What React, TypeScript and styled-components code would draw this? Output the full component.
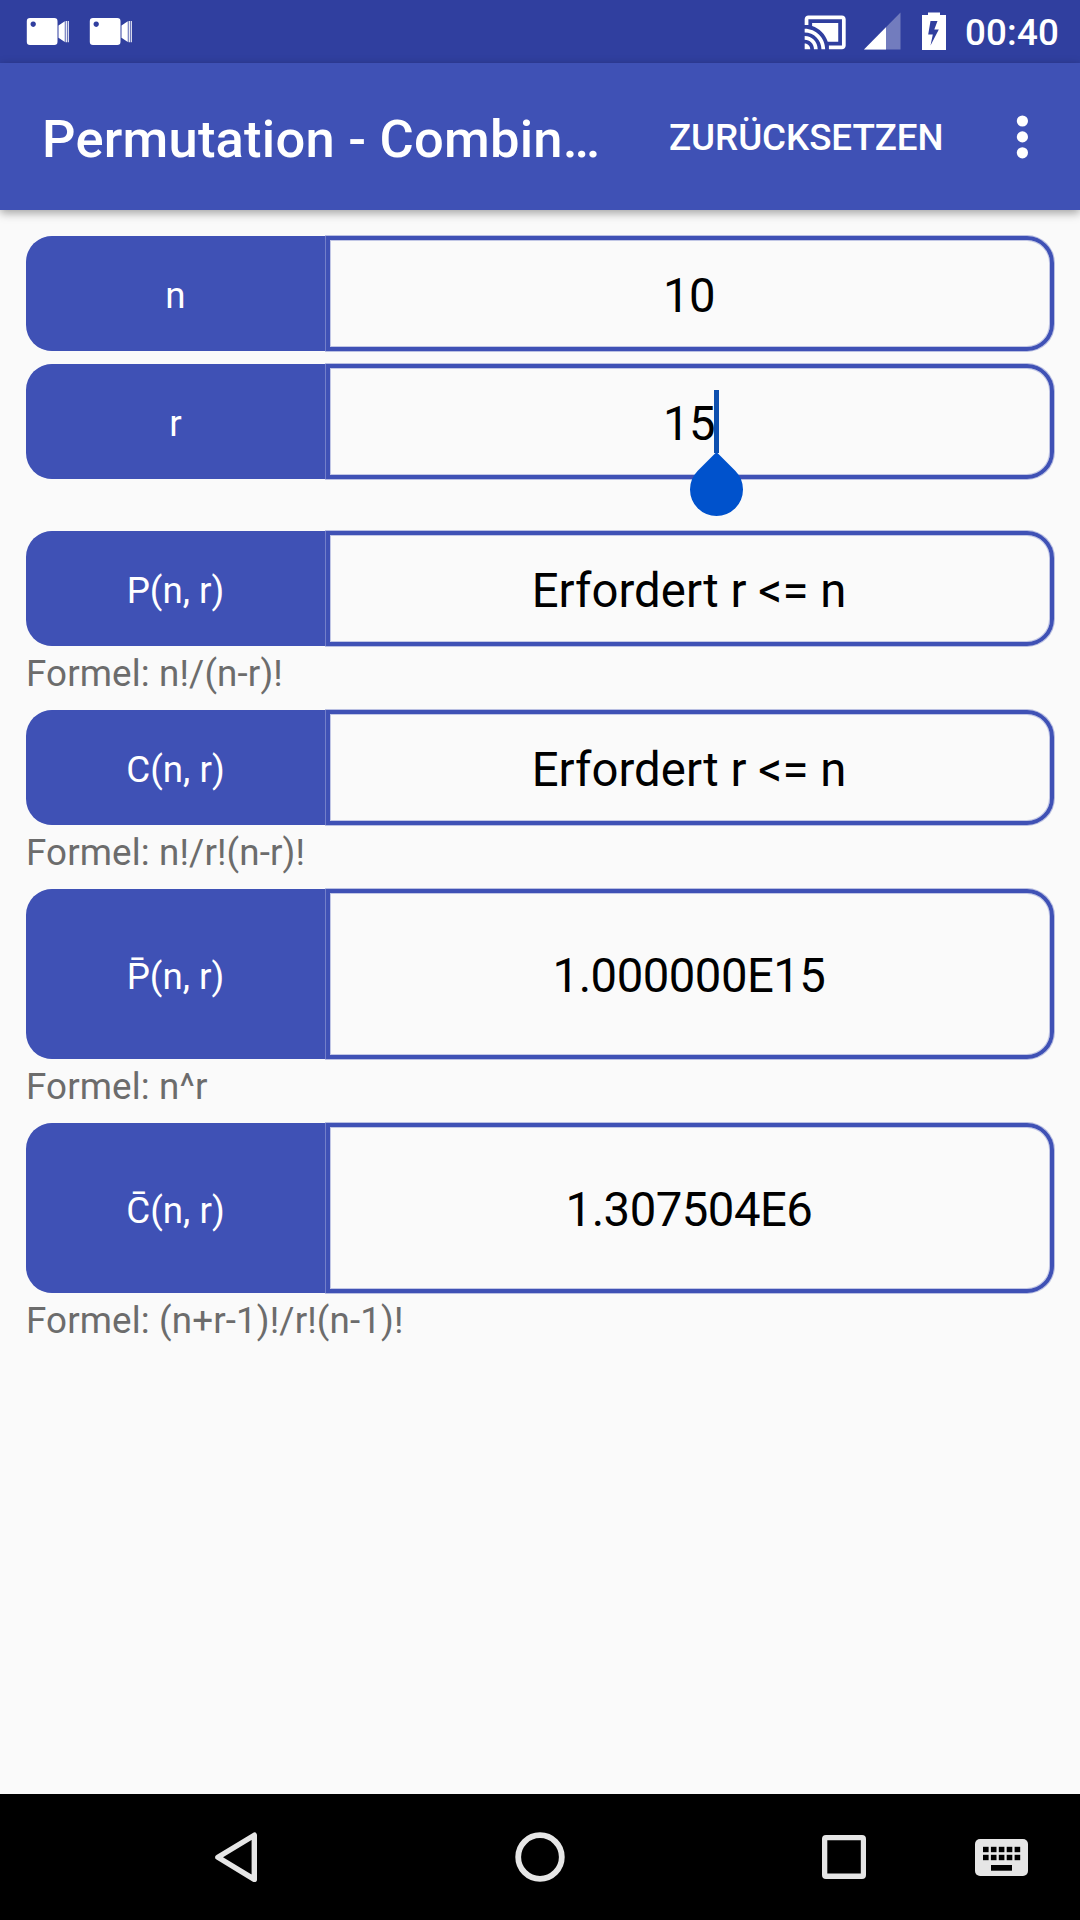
import React from "react";
import styled, { createGlobalStyle } from "styled-components";

const primary = "#3f51b5";

const GlobalStyle = createGlobalStyle`
  * { box-sizing: border-box; }
  body {
    margin: 0;
    background: #fafafa;
    font-family: Roboto, "Noto Sans", sans-serif;
  }
`;

const Screen = styled.div`
  display: flex;
  flex-direction: column;
  width: 1080px;
  height: 1920px;
  overflow: hidden;
  background: #fafafa;
`;

const StatusBar = styled.header`
  display: flex;
  justify-content: space-between;
  flex: none;
  height: 63px;
  padding: 0 21px 0 22px;
  background: #303f9f;
`;

const StatusGroup = styled.div`
  display: flex;
  align-items: center;
`;

const Clock = styled.span`
  padding: 3px 0 0 15px;
  color: #fff;
  font-size: 36.75px;
  font-weight: 500;
  letter-spacing: 0.15px;
  line-height: 44px;
`;

const Toolbar = styled.div`
  display: flex;
  align-items: center;
  flex: none;
  height: 147px;
  padding-left: 42px;
  background: ${primary};
  color: #fff;
  box-shadow: 0 3px 9px rgba(0, 0, 0, 0.36);
  z-index: 1;
`;

const Title = styled.h1`
  flex: none;
  width: 585px;
  margin: 0;
  padding-top: 4px;
  font-size: 52.5px;
  font-weight: 500;
  letter-spacing: 0.22px;
  line-height: 64px;
  white-space: nowrap;
`;

const Action = styled.button`
  flex: none;
  width: 378px;
  padding: 2px 0 0 42px;
  border: 0;
  background: none;
  color: inherit;
  font: 500 36.75px/44px Roboto, sans-serif;
  letter-spacing: -0.07px;
  text-align: left;
`;

const Content = styled.main`
  flex: 1;
  display: flex;
  flex-direction: column;
  padding: 26px 26px 0;
`;

const Row = styled.div<{ $tall?: boolean; $gap?: number }>`
  display: grid;
  grid-template-columns: 299px 728px;
  column-gap: 1px;
  height: ${(p) => (p.$tall ? 170 : 115)}px;
  margin-bottom: ${(p) => p.$gap ?? 0}px;
`;

const Label = styled.div`
  display: flex;
  align-items: center;
  justify-content: center;
  padding-top: 4px;
  border-radius: 26px 0 0 26px;
  background: ${primary};
  box-shadow: 1px 0 0 #8f99d4;
  color: #fff;
  font-size: 36.75px;
  line-height: 43px;
`;

const Overlined = styled.span`
  position: relative;
`;

const Mark = styled.span<{ $left: number }>`
  position: absolute;
  top: -5px;
  left: ${(p) => p.$left}px;
  line-height: 43px;
`;

const Value = styled.div<{ $numeric?: boolean }>`
  display: flex;
  align-items: center;
  justify-content: center;
  border: 4px solid ${primary};
  border-radius: 0 27px 27px 0;
  box-shadow: 0 0 0 1px rgba(63, 81, 181, 0.35), inset 0 0 0 1px rgba(63, 81, 181, 0.3);
  padding: 4px 2px 0 0;
  color: #000;
  font-size: 47.25px;
  letter-spacing: ${(p) => (p.$numeric ? "-0.5px" : "0.06px")};
`;

const Field = styled.span`
  position: relative;
`;

const Caret = styled.span`
  position: absolute;
  top: -6px;
  right: -4px;
  width: 5px;
  height: 63px;
  background: #0d4fae;
`;

const Handle = styled.svg`
  position: absolute;
  top: 56px;
  right: -28px;
`;

const Formula = styled.p`
  height: 64px;
  margin: 0;
  padding-top: 6px;
  color: #6c6c6c;
  font-size: 36.75px;
  letter-spacing: 0.13px;
  line-height: 44px;
`;

const NavBar = styled.nav`
  flex: none;
  height: 126px;
  background: #000;
`;

const Macron = ({ letter, left }: { letter: string; left: number }) => (
  <Overlined>
    {letter}
    <Mark $left={left}>¯</Mark>
  </Overlined>
);

const Camera = () => (
  <svg width="63" height="63" viewBox="0 0 63 63">
    <path
      fill="#fff"
      fillRule="evenodd"
      d="M8 18H32.300q3.200 0 3.200 3.200V41.800q0 3.200-3.200 3.200H8q-3.200 0-3.200-3.200V21.200Q4.800 18 8 18zM11.200 21.500a2.700 2.700 0 1 0 .01 0zM36.500 25.500L42.800 21.200V42L36.500 37.800zM43.600 20.900h1.300v21.300h-1.300zM45.700 20.900h1.100v21.300h-1.100z"
    />
  </svg>
);

const SystemIcons = () => (
  <svg width="150" height="63" viewBox="800 0 150 63" fill="#fff">
    <g transform="translate(802.8 10) scale(1.865)">
      <path d="M1 18v3h3c0-1.660-1.340-3-3-3zm0-4v2c2.760 0 5 2.240 5 5h2c0-3.870-3.130-7-7-7zm18-7H5v1.630c3.960 1.280 7.090 4.410 8.370 8.370H19V7zM1 10v2c4.970 0 9 4.030 9 9h2c0-6.080-4.930-11-11-11zm20-7H3c-1.100 0-2 .9-2 2v3h2V5h18v14h-7v2h7c1.100 0 2-.9 2-2V5c0-1.100-.9-2-2-2z" />
    </g>
    <path d="M864 49.500L900.500 12.500V49.500z" opacity=".32" />
    <path d="M864 49.500L886 27.200V49.500z" />
    <path
      fillRule="evenodd"
      d="M928 12.500h12v2.500h6v35h-24V15h6zM930.500 21L928.200 34.500H932.800L930.500 45.500L938.800 29.500H934.300L937.500 21z"
    />
  </svg>
);

const Overflow = () => (
  <svg width="40" height="60" viewBox="0 0 40 60" fill="#fff">
    <circle cx="17.400" cy="14" r="5.600" />
    <circle cx="17.400" cy="29.900" r="5.600" />
    <circle cx="17.400" cy="45.800" r="5.600" />
  </svg>
);

const NavIcons = () => (
  <svg width="1080" height="126" viewBox="0 0 1080 126" fill="none" stroke="#e6e6e6">
    <path d="M217.900 63.200L254.300 41.200V85.400z" strokeWidth="5.400" strokeLinejoin="round" />
    <circle cx="540" cy="63" r="21.800" strokeWidth="5.800" />
    <path
      fill="#e6e6e6"
      stroke="none"
      fillRule="evenodd"
      d="M826 41h36q4 0 4 4v36q0 4-4 4h-36q-4 0-4-4V45q0-4 4-4zM827.300 46.300v33.300h33.500V46.300z"
    />
    <g stroke="none">
      <rect x="975" y="45" width="53" height="37" rx="5" fill="#e6e6e6" />
      {[0, 1, 2, 3, 4].map((i) => (
        <g key={i} fill="#000">
          <rect x={983 + i * 7.9} y="52.800" width="5.600" height="5.400" />
          <rect x={983 + i * 7.9} y="60.800" width="5.600" height="5.400" />
        </g>
      ))}
      <rect x="991" y="71" width="21" height="5.700" fill="#000" />
    </g>
  </svg>
);

export default function App() {
  return (
    <>
      <GlobalStyle />
      <Screen>
        <StatusBar>
          <StatusGroup>
            <Camera />
            <Camera />
          </StatusGroup>
          <StatusGroup>
            <SystemIcons />
            <Clock>00:40</Clock>
          </StatusGroup>
        </StatusBar>
        <Toolbar>
          <Title>Permutation - Combin…</Title>
          <Action>ZURÜCKSETZEN</Action>
          <Overflow />
        </Toolbar>
        <Content>
          <Row $gap={13}>
            <Label>n</Label>
            <Value $numeric>10</Value>
          </Row>
          <Row $gap={52}>
            <Label>r</Label>
            <Value $numeric>
              <Field>
                15
                <Caret />
                <Handle width="53" height="64" viewBox="0 0 53 64" fill="#0052cc">
                  <path d="M26.500 0L45.240 18.760A26.500 26.500 0 1 1 7.760 18.760z" />
                </Handle>
              </Field>
            </Value>
          </Row>
          <Row>
            <Label>P(n, r)</Label>
            <Value>Erfordert r &lt;= n</Value>
          </Row>
          <Formula>Formel: n!/(n-r)!</Formula>
          <Row>
            <Label>C(n, r)</Label>
            <Value>Erfordert r &lt;= n</Value>
          </Row>
          <Formula>Formel: n!/r!(n-r)!</Formula>
          <Row $tall>
            <Label>
              <span>
                <Macron letter="P" left={2} />
                (n, r)
              </span>
            </Label>
            <Value $numeric>1.000000E15</Value>
          </Row>
          <Formula>Formel: n^r</Formula>
          <Row $tall>
            <Label>
              <span>
                <Macron letter="C" left={4} />
                (n, r)
              </span>
            </Label>
            <Value $numeric>1.307504E6</Value>
          </Row>
          <Formula>Formel: (n+r-1)!/r!(n-1)!</Formula>
        </Content>
        <NavBar>
          <NavIcons />
        </NavBar>
      </Screen>
    </>
  );
}
